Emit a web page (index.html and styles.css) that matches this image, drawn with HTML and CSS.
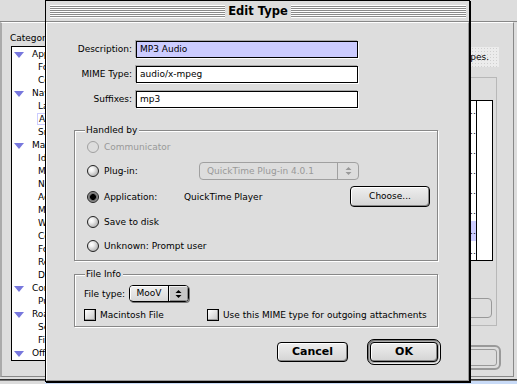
FILE: index.html
```html
<!DOCTYPE html>
<html>
<head>
<meta charset="utf-8">
<link rel="stylesheet" href="styles.css">
</head>
<body>
<div class="desktop">
  <div class="bgwin">
    <div class="bg-title"></div>
    <div class="bg-content">
      <div class="bg-left">
        <div class="bg-caption">Category:</div>
        <div class="tree">
          <div class="node"><span class="tri"></span>Appearance</div>
          <div class="leaf">Fonts</div>
          <div class="leaf">Colors</div>
          <div class="node"><span class="tri"></span>Navigator</div>
          <div class="leaf">Languages</div>
          <div class="leaf"><span class="sel">Applications</span></div>
          <div class="leaf">Smart Browsing</div>
          <div class="node"><span class="tri"></span>Mail &amp; Newsgroups</div>
          <div class="leaf">Identity</div>
          <div class="leaf">Mail Servers</div>
          <div class="leaf">Newsgroup Servers</div>
          <div class="leaf">Addressing</div>
          <div class="leaf">Messages</div>
          <div class="leaf">Window Settings</div>
          <div class="leaf">Copies &amp; Folders</div>
          <div class="leaf">Formatting</div>
          <div class="leaf">Return Receipts</div>
          <div class="leaf">Disk Space</div>
          <div class="node"><span class="tri"></span>Composer</div>
          <div class="leaf">Publishing</div>
          <div class="node"><span class="tri"></span>Roaming Access</div>
          <div class="leaf">Server Information</div>
          <div class="leaf">File Selection</div>
          <div class="node"><span class="tri"></span>Offline</div>
        </div>
      </div>
      <div class="bg-right">
        <div class="bg-desc"><span>file types.</span></div>
        <div class="bg-panel">
          <div class="bg-list">
            <div class="bg-col">
              <div class="bg-row">…</div>
              <div class="bg-row">…</div>
              <div class="bg-row">…</div>
              <div class="bg-row">…</div>
              <div class="bg-row">…</div>
              <div class="bg-row">…</div>
              <div class="bg-row cur">…</div>
              <div class="bg-row">…</div>
            </div>
            <div class="bg-scroll"></div>
          </div>
          <div class="bg-btn">Delete</div>
        </div>
        <div class="bg-okring"><div class="bg-btn2">OK</div></div>
      </div>
    </div>
  </div>

  <div class="dialog">
    <div class="titlebar">
      <span class="stripes"></span>
      <span class="title">Edit Type</span>
      <span class="stripes"></span>
    </div>
    <div class="body">
      <div class="fields">
        <div class="flabel">Description:</div>
        <div class="input hl">MP3 Audio</div>
        <div class="flabel">MIME Type:</div>
        <div class="input">audio/x-mpeg</div>
        <div class="flabel">Suffixes:</div>
        <div class="input">mp3</div>
      </div>

      <div class="group handled">
        <div class="gtitle">Handled by</div>
        <div class="rrow r1">
          <span class="radio dis"></span><span class="rlabel dim">Communicator</span>
        </div>
        <div class="rrow">
          <span class="radio"></span><span class="rlabel wide">Plug-in:</span>
          <div class="popup dis">
            <span class="ptext">QuickTime Plug-in 4.0.1</span>
            <span class="parrow"><svg width="7" height="10" viewBox="0 0 7 10"><polygon points="0.5,4 3.5,1 6.5,4" fill="#999"/><polygon points="0.5,6 3.5,9 6.5,6" fill="#999"/></svg></span>
          </div>
        </div>
        <div class="rrow r3">
          <span class="radio on"></span><span class="rlabel wide">Application:</span>
          <span class="appname">QuickTime Player</span>
          <div class="btn choose">Choose...</div>
        </div>
        <div class="rrow r4">
          <span class="radio"></span><span class="rlabel">Save to disk</span>
        </div>
        <div class="rrow">
          <span class="radio"></span><span class="rlabel">Unknown: Prompt user</span>
        </div>
      </div>

      <div class="group fileinfo">
        <div class="gtitle">File Info</div>
        <div class="ftrow">
          <span class="ftlabel">File type:</span>
          <div class="popup mini">
            <span class="ptext">MooV</span>
            <span class="parrow"><svg width="7" height="10" viewBox="0 0 7 10"><polygon points="0.5,4 3.5,1 6.5,4" fill="#000"/><polygon points="0.5,6 3.5,9 6.5,6" fill="#000"/></svg></span>
          </div>
        </div>
        <div class="cbrow">
          <div class="cbitem first"><span class="check"></span><span>Macintosh File</span></div>
          <div class="cbitem"><span class="check"></span><span>Use this MIME type for outgoing attachments</span></div>
        </div>
      </div>

      <div class="buttons">
        <div class="btn big">Cancel</div>
        <div class="okring"><div class="btn big ok">OK</div></div>
      </div>
    </div>
  </div>
</div>
</body>
</html>
```

FILE: styles.css
```css
* { box-sizing: border-box; }
html, body { margin: 0; padding: 0; }
body {
  width: 517px; height: 384px; overflow: hidden;
  font-family: "DejaVu Sans", sans-serif; font-size: 9px; color: #000;
  background: linear-gradient(to right, #dcdcdc 0 45px, #c9dbf7 45px);
}
.desktop { position: relative; width: 517px; height: 384px; overflow: hidden; }

/* ---------- background window ---------- */
.bgwin {
  position: absolute; left: -1px; top: -1px; width: 520px; height: 381px;
  background: #dddddd; border: 1px solid #333; box-shadow: 1px 1px 0 #777;
}
.bg-title { height: 22px; border-bottom: 1px solid #888; background: #dddddd; }
.bg-content {
  display: flex; height: 355px; margin-right: 4px;
  border-top: 1px solid #fff; border-left: 2px solid #aaa;
  border-right: 1px solid #888; border-bottom: 1px solid #888;
}
.bg-left { width: 220px; padding-left: 8px; }
.bg-caption { margin-top: 10px; line-height: 11px; height: 11px; width: 36px; overflow: hidden; white-space: nowrap; }
.tree {
  margin-top: 2px; margin-left: 1px; width: 35px; height: 315px;
  background: #fff; border: 1px solid #000; padding-top: 1px; overflow: hidden;
}
.node, .leaf { height: 13px; line-height: 13px; white-space: nowrap; }
.node { padding-left: 2px; display: flex; align-items: center; }
.leaf { padding-left: 26px; }
.tri {
  flex: none; width: 0; height: 0; margin-right: 8px;
  border-left: 5px solid transparent; border-right: 5px solid transparent;
  border-top: 6px solid #7777dd;
}
.sel { outline: 1px solid #ccccff; padding: 0 1px; }

.bg-right { flex: 1; display: flex; flex-direction: column; align-items: flex-end; padding-right: 14px; }
.bg-desc {
  margin-top: 24px; height: 20px; width: 40px; line-height: 20px;
  display: flex; justify-content: flex-end; overflow: hidden; white-space: nowrap;
  padding-right: 10px;
  background-color: #ececec;
  background-image: radial-gradient(circle, #d0d0d0 0 0.6px, transparent 0.8px);
  background-size: 3px 3px;
}
.bg-desc span { flex: none; }
.bg-panel {
  margin-top: 10px; margin-right: 2px; width: 100px; height: 249px;
  border: 1px solid #b8b8b8; padding: 22px 3px 0 0;
  display: flex; flex-direction: column; align-items: flex-end;
}
.bg-list { width: 40px; height: 161px; border: 1px solid #000; background: #fff; display: flex; }
.bg-col { flex: 1; overflow: hidden; }
.bg-row { height: 20px; line-height: 20px; text-align: right; white-space: nowrap; }
.bg-row.cur { background: #ccccff; }
.bg-scroll { width: 16px; border-left: 1px solid #000; background: #fff; }
.bg-btn {
  margin-top: 37px; margin-right: 1px; width: 84px; height: 20px;
  border: 1px solid #999; border-radius: 4px; color: #999; text-align: center; line-height: 18px;
}
.bg-okring {
  margin-top: 19px; margin-right: -2px; width: 90px; height: 25px;
  border: 2px solid #999; border-radius: 6px; padding: 2px;
}
.bg-btn2 { height: 100%; border: 1px solid #999; border-radius: 3px; color: #999; text-align: center; line-height: 15px; }

/* ---------- dialog ---------- */
.dialog {
  position: absolute; left: 45px; top: 0; width: 425px; height: 382px;
  border: 1px solid #000; box-shadow: 1px 1px 0 #000;
  background: #dddddd; display: flex; flex-direction: column;
}
.titlebar {
  height: 21px; flex: none; display: flex; align-items: center;
  padding: 0 3px 0 4px; border-bottom: 1px solid #888;
}
.stripes {
  flex: 1; height: 13px;
  background: repeating-linear-gradient(to bottom, #fff 0 1px, #8a8a8a 1px 2px);
}
.title {
  padding: 0 3px; font-family: "DejaVu Sans", sans-serif; font-weight: bold;
  font-size: 11.5px; line-height: 14px;
}
.body {
  flex: 1; padding: 18px 0 0 27px;
  border-top: 1px solid #fff; border-left: 1px solid #fff;
  border-right: 1px solid #9a9a9a; border-bottom: 1px solid #9a9a9a;
}
.fields {
  display: grid; grid-template-columns: 58px 222px; column-gap: 4px; row-gap: 8px;
}
.flabel { text-align: right; line-height: 17px; white-space: nowrap; }
.input {
  height: 17px; line-height: 15px; padding-left: 3px; background: #fff;
  border: 1px solid #000; box-shadow: -1px -1px 0 #aaa, 1px 1px 0 #fff;
}
.input.hl { background: #ccccff; }

.group {
  width: 364px; border: 1px solid #888; box-shadow: 1px 1px 0 #fff, inset 1px 1px 0 #fff;
}
.gtitle {
  width: max-content; height: 12px; line-height: 12px; margin-top: -7px;
  padding: 0 2px 0 1px; background: #dddddd;
}
.handled { margin-top: 22px; padding: 0 7px 2px 10px; }
.rrow { height: 25px; display: flex; align-items: center; }
.rrow.r1 { height: 22px; }
.rrow.r3 { height: 27px; }
.rrow.r4 { height: 23px; }
.radio {
  flex: none; width: 12px; height: 12px; margin-left: 2px; border-radius: 50%;
  border: 1px solid #222;
  background: radial-gradient(circle at 35% 35%, #fff 0, #f0f0f0 25%, #aaa 85%);
}
.radio.dis { border-color: #a0a0a0; background: #dddddd; }
.radio.on {
  background: radial-gradient(circle at 50% 50%, #000 0 2.6px, #666 3.2px, #bbb 6px);
}
.rlabel { margin-left: 5px; white-space: nowrap; }
.rlabel.wide { width: 80px; flex: none; }
.dim { color: #999; }
.appname { white-space: nowrap; }
.popup { display: flex; align-items: stretch; border-radius: 4px; }
.popup.dis {
  margin-left: 15px; width: 160px; height: 18px; border: 1px solid #a0a0a0; color: #999;
}
.popup.dis .ptext { flex: 1; padding-left: 7px; line-height: 16px; }
.popup.dis .parrow {
  width: 21px; border-left: 1px solid #a0a0a0; display: flex; align-items: center; justify-content: center;
}
.btn {
  border: 1px solid #000; border-radius: 4px; text-align: center;
  background: linear-gradient(#eee, #d4d4d4);
  box-shadow: inset 1px 1px 0 #fff, inset -1px -1px 0 #888;
}
.choose { margin-left: auto; width: 80px; height: 21px; line-height: 19px; }

.fileinfo { margin-top: 13px; padding: 0 6px 5px 9px; }
.fileinfo .gtitle { margin-left: 1px; }
.ftrow { margin-top: 5px; height: 17px; display: flex; align-items: center; }
.ftlabel { width: 45px; white-space: nowrap; }
.popup.mini {
  width: 60px; height: 17px; border: 1px solid #000; overflow: hidden;
  background: linear-gradient(#f0f0f0, #d8d8d8);
  box-shadow: 1px 1px 0 #777;
}
.popup.mini .ptext { flex: 1; text-align: center; line-height: 15px; box-shadow: inset 1px 1px 0 #fff; }
.popup.mini .parrow {
  width: 20px; border-left: 1px solid #000; background: #c8c8c8;
  display: flex; align-items: center; justify-content: center;
  box-shadow: inset 1px 1px 0 #eee, inset -1px -1px 0 #888;
}
.cbrow { margin-top: 7px; height: 12px; display: flex; align-items: center; }
.cbitem { display: flex; align-items: center; white-space: nowrap; }
.cbitem.first { width: 123px; }
.check {
  width: 12px; height: 12px; margin-right: 4px; flex: none;
  border: 1px solid #000; background: linear-gradient(135deg, #fff, #c4c4c4);
  box-shadow: inset -1px -1px 0 #999;
}

.buttons {
  margin-top: 12px; width: 367px; display: flex; justify-content: flex-end;
  align-items: center; gap: 19px;
}
.btn.big {
  font-family: "DejaVu Sans", sans-serif; font-weight: bold; font-size: 11px;
  width: 71px; height: 20px; line-height: 18px;
}
.okring {
  width: 74px; height: 26px; border: 1px solid #000; border-radius: 7px; padding: 2px;
  background: #b0b0b0; box-shadow: inset 1px 1px 0 #777, inset -1px -1px 0 #eee;
}
.btn.big.ok { width: 100%; height: 100%; line-height: 18px; }
```
